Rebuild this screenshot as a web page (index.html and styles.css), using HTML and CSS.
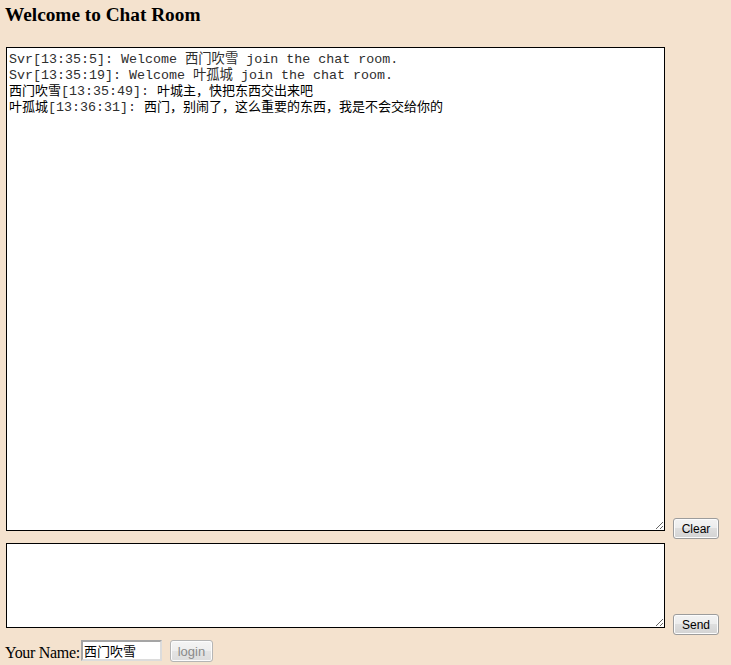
FILE: index.html
```html
<!DOCTYPE html>
<html>
<head>
<meta charset="utf-8">
<title>Chat Room</title>
<link rel="stylesheet" href="styles.css">
</head>
<body>
<h3 class="title">Welcome to Chat Room</h3>
<div class="row row-chat">
  <div class="chat-log">
    <div class="line"><span class="mono">Svr[13:35:5]: Welcome 西门吹雪 join the chat room.</span></div>
    <div class="line"><span class="mono">Svr[13:35:19]: Welcome 叶孤城 join the chat room.</span></div>
    <div class="line"><span class="cjk">西门吹雪</span><span class="mono">[13:35:49]: </span><span class="cjk">叶城主，快把东西交出来吧</span></div>
    <div class="line"><span class="cjk">叶孤城</span><span class="mono">[13:36:31]: </span><span class="cjk">西门，别闹了，这么重要的东西，我是不会交给你的</span></div>
  </div>
  <button class="btn">Clear</button>
</div>
<div class="row row-input">
  <textarea class="msg-input"></textarea>
  <button class="btn">Send</button>
</div>
<div class="row row-name">
  <label class="name-label" for="name">Your Name:</label>
  <input id="name" class="name-input" type="text" value="西门吹雪">
  <button class="btn btn-disabled" disabled>login</button>
</div>
</body>
</html>
```
FILE: styles.css
```css
html, body {
  margin: 0;
  padding: 0;
}
body {
  background: #f4e2ce;
  padding-left: 5px;
  font-family: "Liberation Serif", "Noto Sans CJK SC", serif;
  color: #000;
}
.title {
  margin: 4px 0 21px 0;
  font-size: 19.3px;
  line-height: 22px;
  font-weight: bold;
}
.row {
  display: flex;
  align-items: flex-end;
}
.chat-log {
  margin-left: 1px;
  width: 653px;
  height: 478px;
  padding: 2px;
  border: 1px solid #000;
  background: #fff;
  overflow: auto;
  resize: both;
  margin-bottom: 8px;
}
.line {
  height: 16px;
  line-height: 16px;
  white-space: nowrap;
}
.mono {
  font-family: "Liberation Mono", "Noto Sans CJK SC", monospace;
  font-size: 13.33px;
  line-height: 16px;
  color: #2e2e2e;
}
.cjk {
  font-family: "Noto Sans CJK SC", sans-serif;
  font-size: 13px;
  line-height: 16px;
  color: #000;
}
.btn {
  margin-left: 8px;
  width: 46px;
  height: 21px;
  padding: 0;
  font-family: "Liberation Sans", Arial, sans-serif;
  font-size: 12px;
  color: #000;
  border: 1px solid #9c9c9c;
  border-radius: 3px;
  background: linear-gradient(#f3f3f3, #ececec 50%, #dedede 50%, #d3d3d3);
  box-shadow: inset 0 0 0 1px #fcfcfc;
}
.row-input {
  margin-top: 4px;
}
.msg-input {
  margin: 0 0 7px 1px;
  width: 655px;
  height: 81px;
  padding: 1px;
  border: 1px solid #000;
  background: #fff;
  resize: both;
  font-family: "Liberation Mono", monospace;
  font-size: 13px;
}
.row-name {
  margin-top: 5px;
  align-items: flex-start;
}
.name-label {
  font-size: 16px;
  line-height: 16px;
  margin-top: 5px;
  letter-spacing: -0.3px;
}
.name-input {
  margin: 0 0 0 1px;
  width: 75px;
  height: 17px;
  padding: 0 1px;
  border: 2px solid;
  border-color: #a5a5a5 #dcdcdc #dcdcdc #a5a5a5;
  background: #fff;
  font-family: "Noto Sans CJK SC", sans-serif;
  font-size: 13px;
  line-height: 17px;
}
.btn-disabled {
  margin-left: 8px;
  width: 43px;
  height: 22px;
  font-size: 13px;
  color: #8a8a8a;
  border-color: #b5b5b5;
  background: linear-gradient(#f4f4f4, #eeeeee 50%, #e4e4e4 50%, #dddddd);
}
```
